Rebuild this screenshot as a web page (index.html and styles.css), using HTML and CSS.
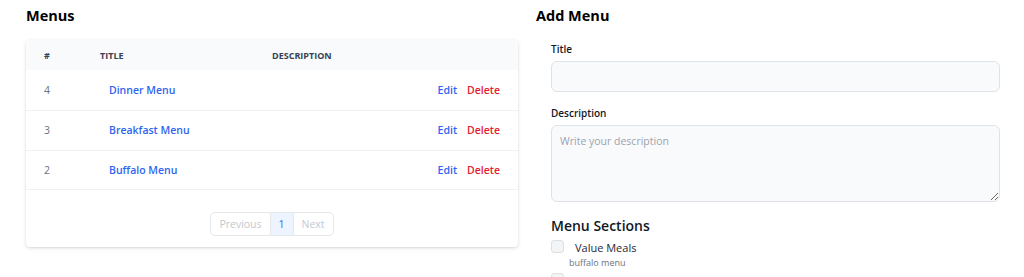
FILE: index.html
```html
<!DOCTYPE html>
<html lang="en">
<head>
    <meta charset="UTF-8">
    <meta name="viewport" content="width=device-width, initial-scale=1.0">
    <title>Menus</title>
    <link rel="stylesheet" href="styles.css">
</head>
<body>
    <div class="page">
        <section class="menus">
            <h2>Menus</h2>
            <div class="card">
                <table class="menu-table">
                    <thead>
                        <tr>
                            <th class="col-id">#</th>
                            <th class="col-title">Title</th>
                            <th class="col-desc">Description</th>
                            <th class="col-actions"></th>
                        </tr>
                    </thead>
                    <tbody>
                        <tr>
                            <td class="col-id">4</td>
                            <td class="col-title"><a href="#" class="menu-link">Dinner Menu</a></td>
                            <td class="col-desc"></td>
                            <td class="col-actions"><a href="#" class="edit">Edit</a><a href="#" class="delete">Delete</a></td>
                        </tr>
                        <tr>
                            <td class="col-id">3</td>
                            <td class="col-title"><a href="#" class="menu-link">Breakfast Menu</a></td>
                            <td class="col-desc"></td>
                            <td class="col-actions"><a href="#" class="edit">Edit</a><a href="#" class="delete">Delete</a></td>
                        </tr>
                        <tr>
                            <td class="col-id">2</td>
                            <td class="col-title"><a href="#" class="menu-link">Buffalo Menu</a></td>
                            <td class="col-desc"></td>
                            <td class="col-actions"><a href="#" class="edit">Edit</a><a href="#" class="delete">Delete</a></td>
                        </tr>
                    </tbody>
                </table>
                <div class="pager">
                    <nav class="pagination">
                        <span class="page-btn prev">Previous</span>
                        <span class="page-btn current">1</span>
                        <span class="page-btn next">Next</span>
                    </nav>
                </div>
            </div>
        </section>

        <section class="add-menu">
            <h2>Add Menu</h2>
            <form class="menu-form">
                <div class="form-group">
                    <label for="title">Title</label>
                    <input type="text" id="title">
                </div>
                <div class="form-group">
                    <label for="description">Description</label>
                    <textarea id="description" placeholder="Write your description"></textarea>
                </div>
                <h3>Menu Sections</h3>
                <div class="section-item">
                    <input type="checkbox" id="sec1" class="check">
                    <div class="section-text">
                        <label for="sec1">Value Meals</label>
                        <small>buffalo menu</small>
                    </div>
                </div>
                <div class="section-item">
                    <input type="checkbox" id="sec2" class="check">
                </div>
            </form>
        </section>
    </div>
</body>
</html>
```

FILE: styles.css
```css
:root {
    --blue: #2f64f0;
    --red: #e4202f;
    --border: #e5e7eb;
    --muted: #6b7280;
    --light: #f9fafb;
}

* {
    box-sizing: border-box;
    margin: 0;
    padding: 0;
}

body {
    font-family: 'Open Sans', 'Noto Sans', sans-serif;
    color: #111827;
    background: #fff;
    overflow: hidden;
}

.page {
    display: grid;
    grid-template-columns: 492px 1fr;
    column-gap: 18px;
    padding: 6px 24px 0 26px;
}

h2 {
    font-size: 14.5px;
    font-weight: 700;
    line-height: 20px;
    margin-bottom: 14px;
    color: #000;
}

.card {
    background: #fff;
    border-radius: 4px;
    box-shadow: 0 1px 4px rgba(0, 0, 0, 0.12), 0 1px 2px rgba(0, 0, 0, 0.06);
    overflow: hidden;
}

.menu-table {
    width: 100%;
    border-collapse: collapse;
    font-size: 10.5px;
}

.menu-table th {
    background: var(--light);
    height: 30px;
    font-size: 9px;
    font-weight: 700;
    text-transform: uppercase;
    text-align: left;
    color: #374151;
}

.menu-table td {
    height: 40px;
    border-bottom: 1px solid #f0f1f3;
}

.menu-table tbody tr:last-child td {
    height: 39px;
}

.col-id {
    width: 74px;
    padding-left: 18px;
    color: var(--muted);
}

.col-title {
    width: 172px;
}

td.col-title {
    padding-left: 9px;
}

.col-actions {
    text-align: right;
    padding-right: 18px;
    white-space: nowrap;
}

a {
    text-decoration: none;
    font-weight: 600;
}

.menu-link,
.edit {
    color: var(--blue);
}

.delete {
    color: var(--red);
    margin-left: 10px;
}

.pager {
    display: flex;
    justify-content: center;
    padding: 22px 0 11px;
}

.pagination {
    display: flex;
    border: 1px solid var(--border);
    border-radius: 5px;
    overflow: hidden;
    font-size: 10.5px;
}

.page-btn {
    height: 22px;
    line-height: 22px;
    color: #c4c8cf;
    padding: 0 8px;
}

.page-btn.current {
    background: #eef4ff;
    color: var(--blue);
    border-left: 1px solid var(--border);
    border-right: 1px solid var(--border);
    width: 24px;
    text-align: center;
}

.menu-form {
    padding: 2px 0 0 15px;
}

.form-group {
    margin-bottom: 14px;
}

.form-group label {
    display: block;
    font-size: 10px;
    font-weight: 600;
    line-height: 14px;
    margin-bottom: 5px;
}

.form-group input,
.form-group textarea {
    width: 100%;
    display: block;
    background: var(--light);
    border: 1px solid #dfe2e6;
    border-radius: 6px;
    font-family: inherit;
    font-size: 10.5px;
    padding: 8px;
}

.form-group input {
    height: 31px;
}

.form-group textarea {
    height: 77px;
    resize: vertical;
}

.form-group textarea::placeholder {
    color: #9ca3af;
}

h3 {
    font-size: 14px;
    font-weight: 600;
    line-height: 20px;
    margin: 14px 0 4px;
}

.section-item {
    display: flex;
    align-items: flex-start;
    margin-bottom: 4px;
}

.check {
    appearance: none;
    width: 13px;
    height: 13px;
    background: #f3f4f6;
    border: 1px solid #dcdfe4;
    border-radius: 3px;
}

.section-text {
    margin-left: 5px;
}

.section-text label {
    display: block;
    font-size: 11px;
    line-height: 16px;
    padding-left: 6px;
    color: #1f2937;
}

.section-text small {
    display: block;
    font-size: 9px;
    color: var(--muted);
    line-height: 13px;
}
```
